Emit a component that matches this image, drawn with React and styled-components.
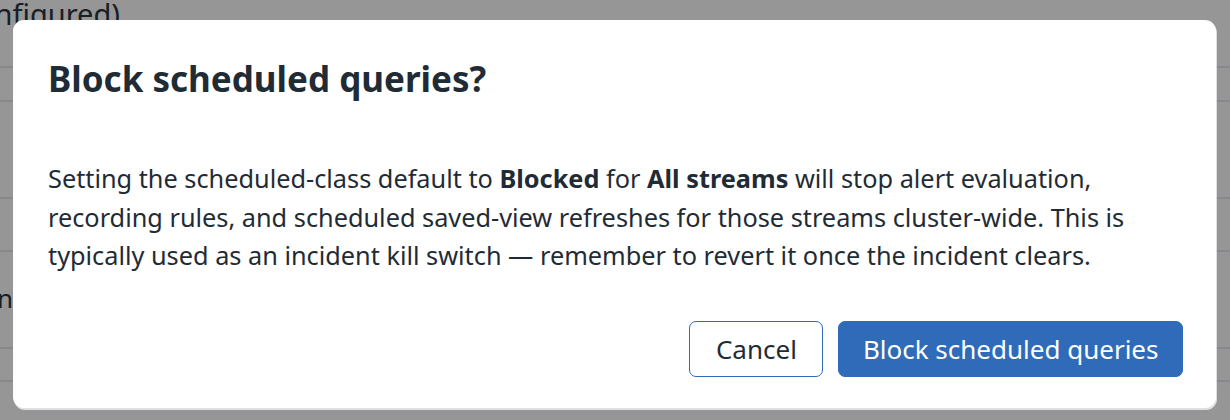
import React from "react";
import styled, { createGlobalStyle } from "styled-components";

const GlobalStyle = createGlobalStyle`
  html, body {
    margin: 0;
    padding: 0;
    background: #ffffff;
    font-family: "Noto Sans", "Open Sans", sans-serif;
    color: #1f2b35;
  }
  * { box-sizing: border-box; }
`;

const Page = styled.div`
  width: 1230px;
  height: 420px;
  overflow: hidden;
  position: relative;
  background: #fff;
`;

const Table = styled.div`
  display: flex;
  flex-direction: column;
`;

const Row = styled.div`
  height: ${(p) => p.h}px;
  border-bottom: 2px solid #e6e7ea;
  display: flex;
  align-items: ${(p) => (p.$top ? "flex-start" : "center")};
`;

const Cell = styled.div`
  width: ${(p) => p.w}px;
  flex-shrink: 0;
  display: flex;
  justify-content: flex-end;
  white-space: nowrap;
  font-size: ${(p) => p.$size || 26}px;
  line-height: 30px;
  color: #2a3540;
  margin-top: ${(p) => p.$shift || 0}px;
`;

const Overlay = styled.div`
  position: absolute;
  inset: 0;
  background: rgba(0, 0, 0, 0.41);
  display: flex;
  align-items: flex-start;
  justify-content: center;
  padding: 20px 14px 0 13px;
`;

const Dialog = styled.div`
  width: 100%;
  height: 388px;
  background: #fff;
  border-radius: 11px;
  box-shadow: 1px 2px 0 rgba(235, 237, 242, 0.85);
  padding: 37px 33px 31px 35px;
  display: flex;
  flex-direction: column;
`;

const Title = styled.h2`
  margin: 0;
  font-size: 35px;
  font-weight: 700;
  line-height: 44px;
  color: #1f2b35;
`;

const Body = styled.p`
  margin: 58px 0 0;
  font-size: 25.3px;
  line-height: 38.5px;
  color: #1f2b35;

  strong {
    font-weight: 700;
  }
`;

const Footer = styled.div`
  margin-top: auto;
  display: flex;
  justify-content: flex-end;
  gap: 15px;
`;

const Button = styled.button`
  height: 56px;
  padding: 0 ${(p) => (p.$primary ? 23.5 : 25.5)}px;
  border-radius: 7px;
  font-family: inherit;
  font-size: 26px;
  cursor: pointer;
  border: 1.5px solid #2f6bb8;
  background: ${(p) => (p.$primary ? "#2f6bb8" : "#fff")};
  color: ${(p) => (p.$primary ? "#fff" : "#1f2b35")};
`;

export default function App() {
  return (
    <>
      <GlobalStyle />
      <Page>
        <Table>
          <Row h={68} $top>
            <Cell w={120} $size={29} $shift={-1}>(not configured)</Cell>
          </Row>
          <Row h={34} />
          <Row h={97} />
          <Row h={53} />
          <Row h={97} $top>
            <Cell w={13} $shift={31}>Location</Cell>
          </Row>
          <Row h={33} />
        </Table>
        <Overlay>
          <Dialog role="dialog" aria-modal="true">
            <Title>Block scheduled queries?</Title>
            <Body>
              Setting the scheduled-class default to <strong>Blocked</strong> for{" "}
              <strong>All streams</strong> will stop alert evaluation, recording
              rules, and scheduled saved-view refreshes for those streams
              cluster-wide. This is typically used as an incident kill switch —
              remember to revert it once the incident clears.
            </Body>
            <Footer>
              <Button>Cancel</Button>
              <Button $primary>Block scheduled queries</Button>
            </Footer>
          </Dialog>
        </Overlay>
      </Page>
    </>
  );
}
